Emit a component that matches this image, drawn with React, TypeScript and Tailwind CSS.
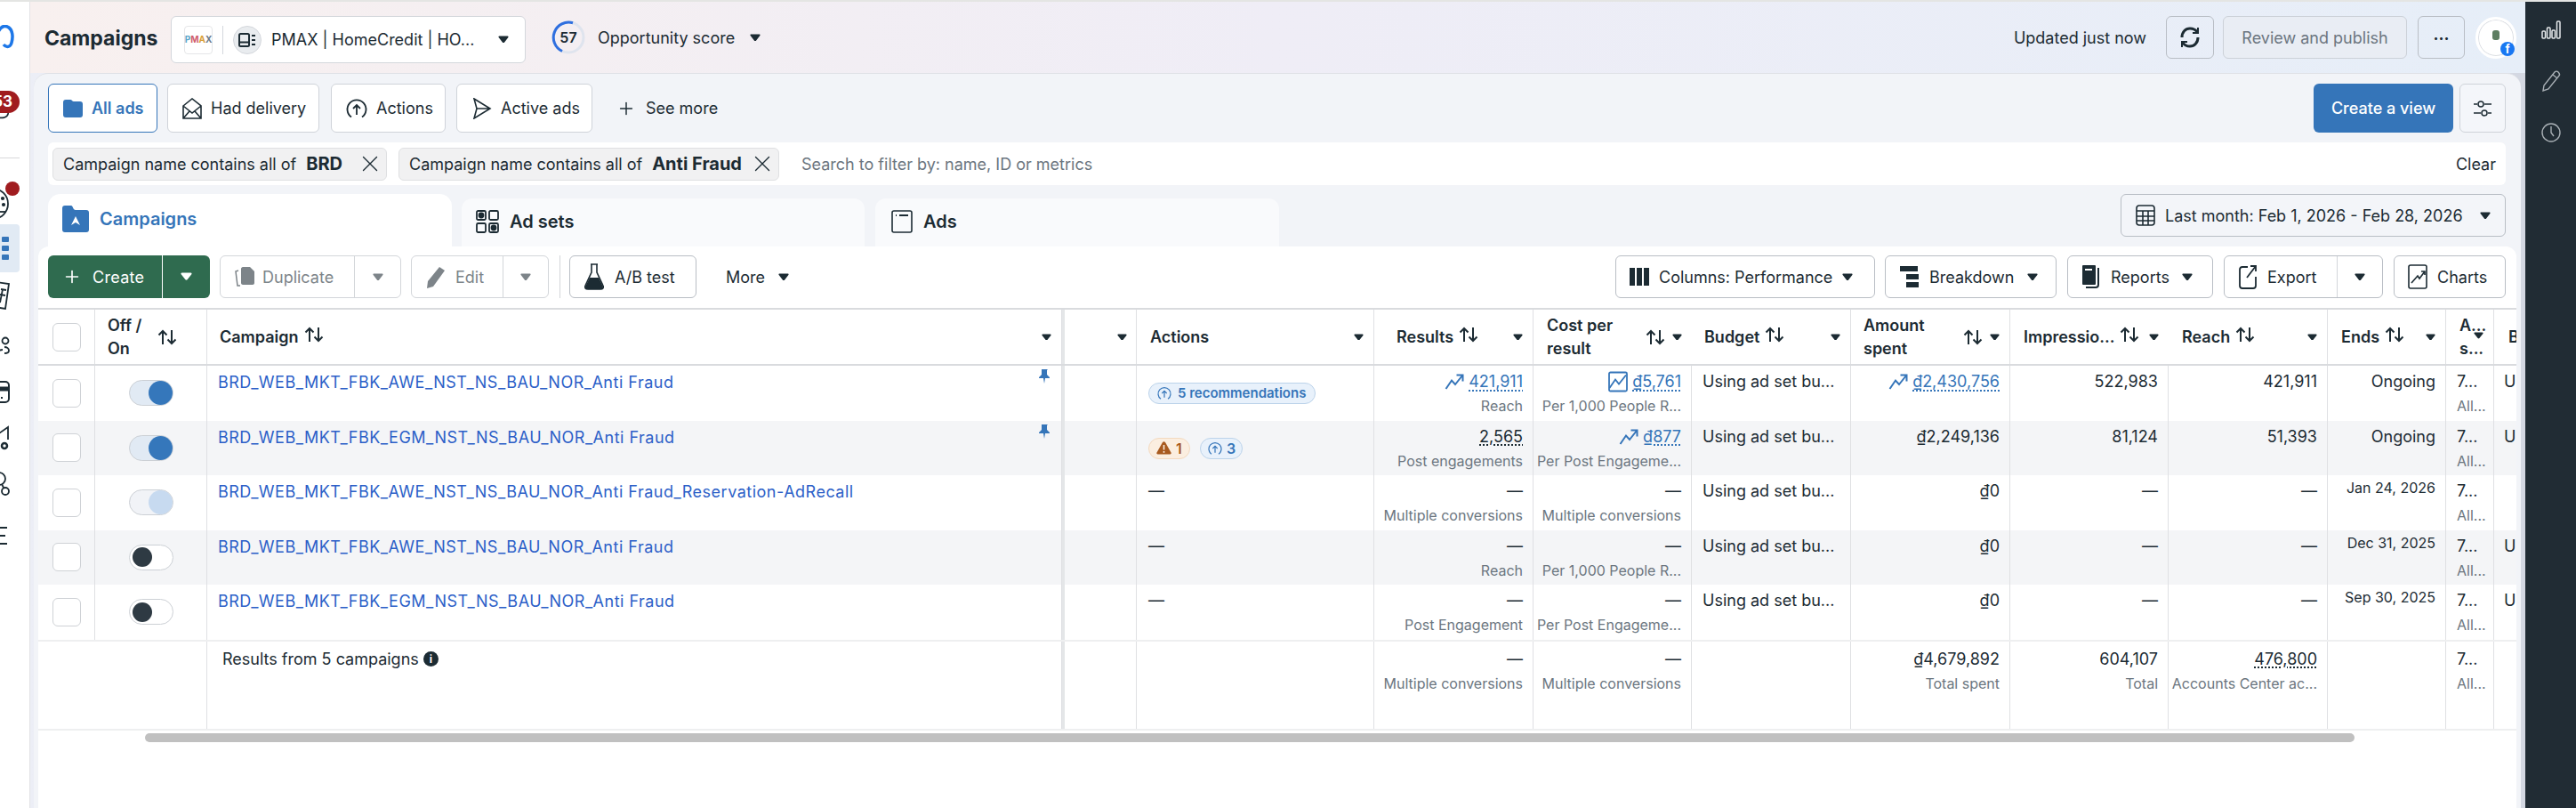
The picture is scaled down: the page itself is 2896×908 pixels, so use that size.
import type { ReactNode } from 'react'
import { Plus, X } from 'lucide-react'

const FONT = "font-['Inter','Liberation_Sans',sans-serif]"
const COLS =
  'grid grid-cols-[64px_126px_961px_84px_267px_179px_178px_179px_179px_178px_179px_133px_54px_25px]'
const DIV = 'border-r border-[#dfe0e3]'
const BTN = 'flex items-center border border-[#b9bec5] rounded-[6px] bg-white h-[48px] text-[18px]'

function Caret({ className = 'text-[#1c2b33]', w = 12 }: { className?: string; w?: number }) {
  return (
    <svg width={w} height={w * 0.72} viewBox="0 0 12 9" className={`shrink-0 ${className}`}>
      <path d="M1.2 0.6h9.6c.9 0 1.3 1 .8 1.6L7 8c-.5.6-1.5.6-2 0L.4 2.2C-.1 1.6.3.6 1.2.6z" fill="currentColor" />
    </svg>
  )
}

function Sort() {
  return (
    <svg width="22" height="20" viewBox="0 0 22 20" fill="none" stroke="#1c2b33" strokeWidth="2" className="shrink-0">
      <path d="M6 18V3M1.5 7.5 6 3l4.500 4.500M16 2v15M11.500 12.500 16 17l4.500-4.500" />
    </svg>
  )
}

function Trend({ className = '' }: { className?: string }) {
  return (
    <svg width="22" height="20" viewBox="0 0 22 20" fill="none" stroke="#3575b9" strokeWidth="2" className={`shrink-0 ${className}`}>
      <path d="M1.500 18 8 8.500l4 4.500L20 3M13.500 2.500H20.500V9.500" />
    </svg>
  )
}

function ChartBox() {
  return (
    <svg width="22" height="24" viewBox="0 0 22 24" fill="none" stroke="#3575b9" strokeWidth="1.800" className="shrink-0">
      <rect x="1" y="1.500" width="20" height="21" rx="1.500" />
      <path d="M1.500 19 8 9.500l4 5 8-10" />
    </svg>
  )
}

function ActionIcon({ color = '#1c2b33', size = 24 }: { color?: string; size?: number }) {
  return (
    <svg width={size} height={size} viewBox="0 0 24 24" fill="none" stroke={color} strokeWidth="1.800" className="shrink-0">
      <path d="M6 21.500A10.500 10.500 0 1 1 18 21.500" />
      <path d="M12 19V8M8 12l4-4 4 4" />
    </svg>
  )
}

function Nav() {
  return (
    <nav className="w-[34px] shrink-0 bg-white border-r border-[#e3e3e5] overflow-hidden flex flex-col text-[#1c2b33]">
      <svg width="16" height="30" viewBox="0 0 16 30" fill="none" stroke="#1d77e8" strokeWidth="3.500" className="mt-[26px]">
        <path d="M-2 8C1 1 6 0 10 3c4 3 5 10 3 17-1 5-6 6-9 2" />
      </svg>
      <div className="relative mt-[44px] h-[36px]">
        <svg width="12" height="36" viewBox="0 0 12 36" fill="none" stroke="#1c2b33" strokeWidth="1.800">
          <path d="M-2 22c6-3 12-1 11 4-1 4-6 5-11 4" />
        </svg>
        <span className="absolute left-0 top-0 h-[25px] w-[22px] rounded-r-full bg-[#a01c1f] text-white text-[17px] font-bold leading-[25px] pr-[8px] overflow-hidden flex justify-end">
          53
        </span>
      </div>
      <div className="mt-[39px] h-[1px] w-[22px] bg-[#d8d9db]" />
      <div className="relative mt-[26px] h-[48px]">
        <svg width="12" height="40" viewBox="0 0 12 40" fill="none" stroke="#1c2b33" strokeWidth="1.800" className="mt-[6px]">
          <circle cx="-8" cy="19" r="17" />
          <circle cx="3" cy="13" r="1.200" fill="#1c2b33" />
          <circle cx="4" cy="20" r="1.200" fill="#1c2b33" />
          <path d="M-6 28h12" />
        </svg>
        <span className="absolute left-[6px] top-0 h-[16px] w-[16px] rounded-full bg-[#a01c1f]" />
      </div>
      <div className="h-[54px] w-[22px] rounded-r-[4px] bg-[#e1eaf4] flex flex-col justify-center gap-[4px]">
        <span className="h-[6px] w-[8px] rounded-[1px] bg-[#3575b9] ml-[2px]" />
        <span className="h-[6px] w-[8px] rounded-[1px] bg-[#3575b9] ml-[2px]" />
        <span className="h-[6px] w-[8px] rounded-[1px] bg-[#3575b9] ml-[2px]" />
      </div>
      <svg width="12" height="34" viewBox="0 0 12 34" fill="none" stroke="#1c2b33" strokeWidth="1.800" className="mt-[10px]">
        <path d="M-4 1 10 3 6 31-6 29M1 9 7 10M0 15 6 16M3 9 0 24" />
      </svg>
      <svg width="12" height="24" viewBox="0 0 12 24" fill="none" stroke="#1c2b33" strokeWidth="1.800" className="mt-[28px]">
        <circle cx="6" cy="5" r="3.500" />
        <path d="M-4 22c0-5 3-7 7-7M5 12c3 0 5 2 5 4s-2 3-5 3" />
      </svg>
      <svg width="12" height="26" viewBox="0 0 12 26" fill="none" stroke="#1c2b33" strokeWidth="2" className="mt-[26px]">
        <rect x="-14" y="1" width="24" height="23" rx="4" />
        <path d="M-12 9H10" strokeWidth="5" />
        <path d="M1 19h2" />
      </svg>
      <svg width="12" height="30" viewBox="0 0 12 30" fill="none" stroke="#1c2b33" strokeWidth="1.800" className="mt-[24px]">
        <path d="M-4 11 9 2v14" />
        <circle cx="5" cy="23" r="3" strokeWidth="2.500" />
      </svg>
      <svg width="12" height="28" viewBox="0 0 12 28" fill="none" stroke="#1c2b33" strokeWidth="1.800" className="mt-[22px]">
        <circle cx="-1" cy="8" r="7" />
        <circle cx="6" cy="22" r="4" />
        <path d="M2 14l2 4" />
      </svg>
      <div className="mt-[34px] flex flex-col gap-[7px]">
        <span className="h-[2px] w-[8px] bg-[#1c2b33]" />
        <span className="h-[2px] w-[6px] bg-[#1c2b33]" />
        <span className="h-[2px] w-[8px] bg-[#1c2b33]" />
      </div>
    </nav>
  )
}

function Header() {
  return (
    <header className="h-[80px] shrink-0 flex items-center pl-[16px] pr-[10px] bg-gradient-to-r from-[#f8f0ef] via-[#efedf6] to-[#e6eef8]">
      <h1 className="text-[23px] font-bold text-[#1c2b33] w-[142px] mt-[2px]">Campaigns</h1>
      <div className="h-[53px] w-[399px] mt-[5px] flex items-center bg-white border border-[#d4d7dc] rounded-[6px] pl-[14px] text-[18px]">
        <span className="w-[32px] h-[32px] rounded-[4px] border border-[#e5e6e8] flex items-center justify-center text-[10px] font-bold">
          <span className="text-[#5aa5c9]">P</span>
          <span className="text-[#cf5d6d]">M</span>
          <span className="text-[#d9a13a]">A</span>
          <span className="text-[#6c7a89]">X</span>
        </span>
        <span className="w-[1px] h-[32px] bg-[#d4d7dc] ml-[11px] mr-[11px]" />
        <span className="w-[32px] h-[32px] rounded-full bg-[#e9ecef] border border-[#d4d7dc] flex items-center justify-center">
          <svg width="20" height="16" viewBox="0 0 20 16" fill="none" stroke="#1c2b33" strokeWidth="2">
            <rect x="1" y="1" width="11" height="14" rx="1.500" />
            <path d="M1 10.500h11M15 3h4M15 8h4M15 13h4" />
          </svg>
        </span>
        <span className="ml-[11px] w-[255px]">PMAX | HomeCredit | HO...</span>
        <Caret />
      </div>
      <div className="ml-[29px] relative w-[38px] h-[38px] flex items-center justify-center">
        <svg width="38" height="38" viewBox="0 0 38 38" fill="none" strokeWidth="3" className="absolute inset-0">
          <circle cx="19" cy="19" r="17" stroke="#dfe4ee" />
          <path d="M12 34.500A17 17 0 0 1 24 2.800" stroke="#2f6fdf" />
        </svg>
        <span className="text-[16px] font-semibold">57</span>
      </div>
      <span className="ml-[14px] text-[18px] w-[171px]">Opportunity score</span>
      <Caret />
      <div className="ml-auto flex items-center">
        <span className="text-[18px] mr-[22px]">Updated just now</span>
        <button className={`${BTN} w-[54px] justify-center !bg-transparent`}>
          <svg width="24" height="28" viewBox="0 0 24 28" fill="none" stroke="#1c2b33" strokeWidth="3">
            <path d="M3 14c0-6 4-10 9-10 3 0 6 1 8 4M21 14c0 6-4 10-9 10-3 0-6-1-8-4" />
            <path d="M21 3v6h-6M3 25v-6h6" strokeWidth="2" />
          </svg>
        </button>
        <button className={`${BTN} ml-[10px] w-[207px] justify-center !bg-[#e9edf4] !border-[#ccd1d8] text-[#6c7680]`}>
          Review and publish
        </button>
        <button className={`${BTN} ml-[12px] w-[53px] justify-center !bg-transparent`}>
          <span className="font-bold text-[18px] leading-[18px] -mt-[6px]">...</span>
        </button>
        <div className="ml-[12px] relative w-[46px] h-[47px] rounded-full bg-white border-[3px] border-white shadow-[inset_0_0_0_1px_#dcdfe4] flex items-center justify-center">
          <span className="w-[8px] h-[11px] rounded-[3px] bg-[#5e7e62] -mt-[6px]" />
          <span className="absolute -right-[1px] bottom-0 w-[16px] h-[16px] rounded-full bg-[#1877f2] text-white text-[13px] font-bold leading-[17px] text-center">
            f
          </span>
        </div>
      </div>
    </header>
  )
}

function ViewTab({ children, active, className }: { children: ReactNode; active?: boolean; className: string }) {
  return (
    <button
      className={`h-[55px] flex items-center gap-[10px] rounded-[6px] border bg-white text-[18px] ${
        active ? 'border-[#3575b9] text-[#3575b9] font-semibold' : 'border-[#cfd3d9]'
      } ${className}`}
    >
      {children}
    </button>
  )
}

function Chip({ label, value, className }: { label: string; value: string; className: string }) {
  return (
    <div className={`h-[37px] flex items-center bg-[#f1f1f2] border border-[#dfe0e2] rounded-[6px] pl-[11px] text-[18px] ${className}`}>
      <span>{label}</span>
      <span className="font-bold text-[20px] ml-[11px]">{value}</span>
      <X size={30} strokeWidth={1.100} className="ml-auto mr-[3px]" />
    </div>
  )
}

function Filters() {
  return (
    <>
      <div className="flex items-center">
        <ViewTab active className="w-[123px] pl-[16px]">
          <svg width="22" height="20" viewBox="0 0 22 20" fill="#3575b9">
            <path d="M0 3c0-2 1-3 3-3h5c2 0 2 2 4 2h7c2 0 3 1 3 3v12c0 2-1 3-3 3H3c-2 0-3-1-3-3z" />
          </svg>
          All ads
        </ViewTab>
        <ViewTab className="w-[171px] ml-[11px] pl-[16px]">
          <svg width="22" height="24" viewBox="0 0 22 24" fill="none" stroke="#1c2b33" strokeWidth="1.600" className="shrink-0">
            <path d="M1 9 11 1l10 8v14H1zM1 9l10 8 10-8M1 23l7-8M21 23l-7-8" />
          </svg>
          Had delivery
        </ViewTab>
        <ViewTab className="w-[129px] ml-[13px] pl-[16px]">
          <ActionIcon />
          Actions
        </ViewTab>
        <ViewTab className="w-[153px] ml-[12px] pl-[17px]">
          <svg width="22" height="24" viewBox="0 0 22 24" fill="none" stroke="#1c2b33" strokeWidth="1.600" className="shrink-0">
            <path d="M2 1 20 12 2 23l3-11zM5 12h15" />
          </svg>
          Active ads
        </ViewTab>
        <Plus size={22} strokeWidth={1.600} className="ml-[27px]" />
        <span className="text-[18px] ml-[11px]">See more</span>
        <button className="ml-auto w-[157px] h-[55px] rounded-[6px] bg-[#3575b9] text-white text-[18px] font-medium">
          Create a view
        </button>
        <button className="ml-[7px] w-[52px] h-[55px] rounded-[6px] border border-[#cfd3d9] bg-[#f4f6fa] flex items-center justify-center">
          <svg width="22" height="20" viewBox="0 0 22 20" fill="none" stroke="#1c2b33" strokeWidth="1.500">
            <path d="M1 5h4M13 5h8M1 15h8M17 15h4" />
            <circle cx="9" cy="5" r="3" />
            <circle cx="13" cy="15" r="3" />
          </svg>
        </button>
      </div>
      <div className="mt-[11px] h-[48px] flex items-center bg-white rounded-[6px] pl-[5px] pr-[11px] text-[18px]">
        <Chip label="Campaign name contains all of" value="BRD" className="w-[376px]" />
        <Chip label="Campaign name contains all of" value="Anti Fraud" className="w-[428px] ml-[13px]" />
        <span className="ml-[25px] text-[#6c7680]">Search to filter by: name, ID or metrics</span>
        <span className="ml-auto">Clear</span>
      </div>
      <div className="mt-[10px] h-[59px] flex items-end">
        <div className="w-[454px] h-[59px] rounded-t-[14px] bg-white flex items-center gap-[12px] pl-[16px] pb-[4px] text-[20px] font-semibold text-[#3575b9]">
          <svg width="30" height="30" viewBox="0 0 30 30">
            <path d="M0 3c0-2 1-3 3-3h7c2 0 2 5 5 5h12c2 0 3 1 3 3v19c0 2-1 3-3 3H3c-2 0-3-1-3-3z" fill="#3575b9" />
            <path d="M15 12l5 10-5-3-5 3z" fill="#fff" />
          </svg>
          Campaigns
        </div>
        <div className="ml-[11px] w-[453px] h-[54px] rounded-t-[12px] bg-[#f9fafc] flex items-center gap-[12px] pl-[16px] pb-[3px] text-[20px] font-semibold">
          <svg width="26" height="26" viewBox="0 0 26 26" fill="none" stroke="#1c2b33" strokeWidth="1.800" className="shrink-0">
            <rect x="1" y="1" width="10" height="10" rx="1.500" />
            <rect x="15" y="1" width="10" height="10" rx="1.500" />
            <rect x="1" y="15" width="10" height="10" rx="1.500" />
            <rect x="15" y="15" width="10" height="10" rx="1.500" />
            <circle cx="6" cy="6" r="2.500" fill="#1c2b33" />
            <circle cx="20" cy="20" r="2.500" fill="#1c2b33" />
          </svg>
          Ad sets
        </div>
        <div className="ml-[12px] w-[454px] h-[54px] rounded-t-[12px] bg-[#f9fafc] flex items-center gap-[12px] pl-[18px] pb-[3px] text-[20px] font-semibold">
          <svg width="24" height="26" viewBox="0 0 24 26" fill="none" stroke="#1c2b33" strokeWidth="1.600" className="shrink-0">
            <rect x="1" y="1" width="22" height="24" rx="2" />
            <path d="M5 6h1M9 6h10" strokeWidth="2" />
          </svg>
          Ads
        </div>
        <button className={`${BTN} ml-auto self-start w-[433px] pl-[16px] gap-[11px] !bg-[#f3f5f9]`}>
          <svg width="22" height="24" viewBox="0 0 22 24" fill="none" stroke="#1c2b33" strokeWidth="1.600" className="shrink-0">
            <rect x="1" y="1" width="20" height="22" rx="3" />
            <path d="M1 7h20M1 13h20M1 18h20M8 7v16M14 7v16" />
          </svg>
          <span className="whitespace-nowrap">Last month: Feb 1, 2026 - Feb 28, 2026</span>
          <Caret className="text-[#1c2b33] ml-[8px]" />
        </button>
      </div>
    </>
  )
}

function Toolbar() {
  return (
    <div className="flex items-center pl-[11px] pr-[12px] pt-[10px] text-[#1c2b33]">
      <button className="h-[48px] w-[128px] rounded-l-[6px] bg-[#2f6b4f] text-white text-[18px] tracking-[0.3px] flex items-center pl-[16px] gap-[12px]">
        <Plus size={22} strokeWidth={1.800} />
        Create
      </button>
      <button className="h-[48px] w-[53px] ml-[1px] rounded-r-[6px] bg-[#2f6b4f] flex items-center justify-center">
        <Caret className="text-white" w={13} />
      </button>
      <div className={`${BTN} ml-[11px] w-[204px] !border-[#d3d6da] text-[#7d8489]`}>
        <div className="w-[151px] h-full border-r border-[#d3d6da] flex items-center pl-[16px] gap-[9px]">
          <svg width="22" height="24" viewBox="0 0 22 24" className="shrink-0">
            <path d="M9 1h8l5 5v13c0 1-1 2-2 2H9c-1 0-2-1-2-2V3c0-1 1-2 2-2z" fill="#7d8489" />
            <path d="M4 5 1 6l2 16h3" fill="none" stroke="#7d8489" strokeWidth="1.500" />
          </svg>
          Duplicate
        </div>
        <div className="flex-1 flex justify-center">
          <Caret className="text-[#7d8489]" />
        </div>
      </div>
      <div className={`${BTN} ml-[11px] w-[155px] !border-[#d3d6da] text-[#7d8489]`}>
        <div className="w-[103px] h-full border-r border-[#d3d6da] flex items-center pl-[16px] gap-[11px]">
          <svg width="22" height="26" viewBox="0 0 22 26" className="shrink-0">
            <path d="M15 2l6 4L8 24l-7 2 1-8z" fill="#7d8489" />
          </svg>
          Edit
        </div>
        <div className="flex-1 flex justify-center">
          <Caret className="text-[#7d8489]" />
        </div>
      </div>
      <span className="ml-[12px] w-[1px] h-[48px] bg-[#d3d6da]" />
      <button className={`${BTN} ml-[10px] w-[143px] pl-[16px] gap-[12px]`}>
        <svg width="22" height="32" viewBox="0 0 22 32" className="shrink-0">
          <path d="M7 2h8M8 2v9L1 26c-1 2 0 4 3 4h14c3 0 4-2 3-4L14 11V2" fill="none" stroke="#1c2b33" strokeWidth="1.600" />
          <path d="M6 17h10l5 10c0 2-1 3-3 3H4c-2 0-3-1-3-3z" fill="#1c2b33" />
        </svg>
        A/B test
      </button>
      <span className="ml-[33px] text-[18px]">More</span>
      <Caret className="text-[#1c2b33] ml-[15px]" />
      <button className={`${BTN} ml-auto w-[292px] pl-[15px] gap-[11px]`}>
        <svg width="22" height="22" viewBox="0 0 22 22" fill="#1c2b33" className="shrink-0">
          <rect x="0" y="1" width="6" height="20" />
          <rect x="8" y="1" width="6" height="20" />
          <rect x="16" y="1" width="6" height="20" />
        </svg>
        <span className="whitespace-nowrap">Columns: Performance</span>
        <Caret className="text-[#1c2b33]" />
      </button>
      <button className={`${BTN} ml-[11px] w-[193px] pl-[16px] gap-[11px]`}>
        <svg width="22" height="24" viewBox="0 0 22 24" fill="#1c2b33" className="shrink-0">
          <rect x="0" y="0" width="20" height="6" />
          <rect x="7" y="9" width="14" height="6" />
          <rect x="7" y="18" width="14" height="6" />
        </svg>
        Breakdown
        <Caret className="text-[#1c2b33] ml-[4px]" />
      </button>
      <button className={`${BTN} ml-[12px] w-[164px] pl-[15px] gap-[11px]`}>
        <svg width="22" height="26" viewBox="0 0 22 26" className="shrink-0">
          <rect x="1" y="0" width="15" height="22" rx="1" fill="#1c2b33" />
          <path d="M19 3v19c0 2-1 3-3 3H5" fill="none" stroke="#1c2b33" strokeWidth="2" />
          <path d="M4 5h8" stroke="#fff" strokeWidth="2" />
        </svg>
        Reports
        <Caret className="text-[#1c2b33] ml-[3px]" />
      </button>
      <div className={`${BTN} ml-[12px] w-[179px]`}>
        <div className="w-[127px] h-full border-r border-[#d3d6da] flex items-center pl-[16px] gap-[12px]">
          <svg width="20" height="28" viewBox="0 0 20 28" fill="none" stroke="#1c2b33" strokeWidth="1.800" className="shrink-0">
            <path d="M10 3H4C2 3 1 4 1 6v18c0 2 1 3 3 3h12c2 0 3-1 3-3V14" />
            <path d="M9 15 19 2M13 2h6v6" />
          </svg>
          Export
        </div>
        <div className="flex-1 flex justify-center">
          <Caret />
        </div>
      </div>
      <button className={`${BTN} ml-[12px] w-[126px] pl-[15px] gap-[11px]`}>
        <svg width="22" height="28" viewBox="0 0 22 28" fill="none" stroke="#1c2b33" strokeWidth="1.600" className="shrink-0">
          <rect x="1" y="1" width="20" height="26" rx="2" />
          <path d="M4 21 11 13l2 3 6-8M15 8h4v4" />
        </svg>
        Charts
      </button>
    </div>
  )
}

function Check({ white }: { white?: boolean }) {
  return <span className={`w-[32px] h-[32px] rounded-[6px] border border-[#cfd2d6] ${white ? 'bg-white' : ''}`} />
}

function Toggle({ state }: { state: 'on' | 'dim' | 'off' }) {
  if (state === 'off') {
    return (
      <span className="w-[50px] h-[29px] rounded-full border border-[#ccd0d5] bg-white flex items-center pl-[3px]">
        <span className="w-[22px] h-[22px] rounded-full bg-[#2e3a43]" />
      </span>
    )
  }
  const track = state === 'on' ? 'bg-[#e1eaf4]' : 'bg-[#f1f3f7]'
  const knob = state === 'on' ? 'bg-[#3577bb]' : 'bg-[#c7daf0]'
  return (
    <span className={`w-[50px] h-[29px] rounded-full border border-[#ccd0d5] flex items-center justify-end ${track}`}>
      <span className={`w-[27px] h-[27px] rounded-full ${knob}`} />
    </span>
  )
}

function HeadCell({
  title,
  second,
  sort,
  caret = true,
  pl = 'pl-[15px]',
  border = true,
}: {
  title: string
  second?: string
  sort?: boolean
  caret?: boolean
  pl?: string
  border?: boolean
}) {
  return (
    <div className={`relative flex items-center pr-[11px] text-[18px] font-semibold leading-[26px] ${pl} ${border ? DIV : ''}`}>
      <div className="whitespace-nowrap">
        {title}
        {second && <div>{second}</div>}
      </div>
      {second ? (
        <span className="ml-auto mr-[8px] flex">{sort && <Sort />}</span>
      ) : (
        sort && (
          <span className="ml-[6px] -mt-[6px]">
            <Sort />
          </span>
        )
      )}
      {caret && (second ? <Caret w={11} /> : <Caret w={11} className="ml-auto text-[#1c2b33]" />)}
    </div>
  )
}

function TableHead() {
  return (
    <div className={`${COLS} mt-[11px] h-[65px] border-t-2 border-b-2 border-[#d9dbde]`}>
      <div className={`flex items-center justify-center ${DIV}`}>
        <Check />
      </div>
      <div className={`flex items-center pl-[14px] pr-[12px] text-[18px] font-semibold leading-[26px] ${DIV}`}>
        <div>
          Off /<div>On</div>
        </div>
        <span className="ml-[18px]">
          <Sort />
        </span>
      </div>
      <HeadCell title="Campaign" sort pl="pl-[14px]" />
      <div className={`flex items-center justify-end pr-[10px] border-l-[3px] border-l-[#e4e6e8] ${DIV}`}>
        <Caret w={11} />
      </div>
      <HeadCell title="Actions" />
      <HeadCell title="Results" sort pl="pl-[25px]" />
      <HeadCell title="Cost per" second="result" sort border={false} />
      <HeadCell title="Budget" sort pl="pl-[14px]" />
      <HeadCell title="Amount" second="spent" sort pl="pl-[14px]" />
      <HeadCell title="Impressio..." sort border={false} />
      <HeadCell title="Reach" sort />
      <HeadCell title="Ends" sort />
      <div className={`relative pl-[15px] text-[18px] font-semibold leading-[26px] flex items-center ${DIV}`}>
        <div>
          A...<div>s...</div>
        </div>
        <span className="absolute left-[31px] top-[25px]">
          <Caret w={11} />
        </span>
      </div>
      <div className="pl-[16px] overflow-hidden text-[18px] font-semibold flex items-center">B</div>
    </div>
  )
}

type NumCell = { v: ReactNode; sub?: string; link?: boolean; dotted?: boolean; icon?: ReactNode }

function Num({ v, sub, link, dotted, icon }: NumCell) {
  return (
    <div className={`flex flex-col items-end pr-[11px] pt-[6px] ${DIV} whitespace-nowrap overflow-hidden`}>
      <div className="flex items-center gap-[5px] h-[24px]">
        {icon}
        <span
          className={`${link ? 'text-[#3575b9]' : ''} ${
            dotted ? 'underline decoration-dotted underline-offset-[3px] decoration-[1.500px]' : ''
          }`}
        >
          {v}
        </span>
      </div>
      {sub && <div className="mt-[3px] h-[24px] leading-[24px] text-[16px] text-[#6c7680]">{sub}</div>}
    </div>
  )
}

const ROWS = [
  {
    toggle: 'on' as const,
    pin: true,
    name: 'BRD_WEB_MKT_FBK_AWE_NST_NS_BAU_NOR_Anti Fraud',
    actions: (
      <span className="mt-[19px] h-[24px] w-[188px] rounded-full bg-[#e8f1fb] border border-[#bcd3ea] text-[#3575b9] text-[15px] font-semibold flex items-center pl-[9px] gap-[7px]">
        <ActionIcon color="#3575b9" size={16} />
        5 recommendations
      </span>
    ),
    results: { v: '421,911', sub: 'Reach', link: true, dotted: true, icon: <Trend /> },
    cost: { v: '₫5,761', sub: 'Per 1,000 People R...', link: true, dotted: true, icon: <ChartBox /> },
    amount: { v: '₫2,430,756', link: true, dotted: true, icon: <Trend /> },
    imp: '522,983',
    reach: '421,911',
    ends: 'Ongoing',
    b: 'U',
  },
  {
    toggle: 'on' as const,
    pin: true,
    name: 'BRD_WEB_MKT_FBK_EGM_NST_NS_BAU_NOR_Anti Fraud',
    actions: (
      <div className="mt-[19px] flex gap-[11px]">
        <span className="h-[24px] w-[47px] rounded-full bg-[#fbeee0] border border-[#f3d9bf] text-[#a85a1f] text-[16px] font-semibold flex items-center pl-[8px] gap-[5px]">
          <svg width="17" height="15" viewBox="0 0 17 15">
            <path d="M7 1c1-1 2-1 3 0l6.500 11.500c.5 1 0 2-1 2h-14c-1 0-1.500-1-1-2z" fill="#a85a1f" />
            <path d="M8.500 4v5.500M8.500 11v1.800" stroke="#fbeee0" strokeWidth="1.600" />
          </svg>
          1
        </span>
        <span className="h-[24px] w-[48px] rounded-full bg-[#e8f1fb] border border-[#bcd3ea] text-[#3575b9] text-[16px] font-semibold flex items-center pl-[8px] gap-[5px]">
          <ActionIcon color="#3575b9" size={16} />3
        </span>
      </div>
    ),
    results: { v: '2,565', sub: 'Post engagements', dotted: true },
    cost: { v: '₫877', sub: 'Per Post Engageme...', link: true, dotted: true, icon: <Trend /> },
    amount: { v: '₫2,249,136' },
    imp: '81,124',
    reach: '51,393',
    ends: 'Ongoing',
    b: 'U',
  },
  {
    toggle: 'dim' as const,
    name: 'BRD_WEB_MKT_FBK_AWE_NST_NS_BAU_NOR_Anti Fraud_Reservation-AdRecall',
    results: { v: '—', sub: 'Multiple conversions' },
    cost: { v: '—', sub: 'Multiple conversions' },
    amount: { v: '₫0' },
    imp: '—',
    reach: '—',
    ends: 'Jan 24, 2026',
    b: '',
  },
  {
    toggle: 'off' as const,
    name: 'BRD_WEB_MKT_FBK_AWE_NST_NS_BAU_NOR_Anti Fraud',
    results: { v: '—', sub: 'Reach' },
    cost: { v: '—', sub: 'Per 1,000 People R...' },
    amount: { v: '₫0' },
    imp: '—',
    reach: '—',
    ends: 'Dec 31, 2025',
    b: 'U',
  },
  {
    toggle: 'off' as const,
    name: 'BRD_WEB_MKT_FBK_EGM_NST_NS_BAU_NOR_Anti Fraud',
    results: { v: '—', sub: 'Post Engagement' },
    cost: { v: '—', sub: 'Per Post Engageme...' },
    amount: { v: '₫0' },
    imp: '—',
    reach: '—',
    ends: 'Sep 30, 2025',
    b: 'U',
  },
]

function AttrCell() {
  return (
    <div className={`pl-[12px] pt-[6px] whitespace-nowrap ${DIV}`}>
      <div className="h-[24px]">7...</div>
      <div className="mt-[3px] h-[24px] leading-[24px] text-[16px] text-[#6c7680]">All...</div>
    </div>
  )
}

function Row({ r, i }: { r: (typeof ROWS)[number]; i: number }) {
  const isDate = r.ends !== 'Ongoing'
  return (
    <div className={`${COLS} h-[61.500px] text-[18px] leading-[24px] ${i % 2 === 1 ? 'bg-[#f4f5f7]' : ''}`}>
      <div className={`flex items-center justify-center ${DIV}`}>
        <Check white={i % 2 === 1} />
      </div>
      <div className={`flex items-center justify-center ${DIV}`}>
        <Toggle state={r.toggle} />
      </div>
      <div className={`relative pl-[12px] pt-[7px] text-[#2c5fc8] tracking-[0.5px] ${DIV}`}>
        <span>{r.name}</span>
        {r.pin && (
          <svg width="16" height="18" viewBox="0 0 16 18" fill="#3575b9" className="absolute right-[11px] top-[3px]">
            <path d="M5 1h7l-1 1v5l3 3v1H9l-1 6-1-6H2v-1l3-3V2z" />
          </svg>
        )}
      </div>
      <div className={`border-l-[3px] border-l-[#e4e6e8] ${DIV}`} />
      <div className={`pl-[13px] ${r.actions ? '' : 'pt-[6px]'} ${DIV}`}>
        {r.actions ?? <div className="h-[24px]">—</div>}
      </div>
      <Num {...r.results} />
      <Num {...r.cost} />
      <div className={`pl-[12px] pt-[6px] whitespace-nowrap ${DIV}`}>Using ad set bu...</div>
      <Num {...r.amount} />
      <Num v={r.imp} />
      <Num v={r.reach} />
      <div className={`text-right pr-[11px] ${isDate ? 'pt-[2px] text-[16px]' : 'pt-[6px]'} ${DIV}`}>{r.ends}</div>
      <AttrCell />
      <div className="pl-[11px] pt-[6px]">{r.b}</div>
    </div>
  )
}

function FootNum({ v, sub, dotted }: { v: string; sub: string; dotted?: boolean }) {
  return (
    <div className={`flex flex-col items-end pr-[11px] pt-[8px] whitespace-nowrap ${DIV}`}>
      <div className={`h-[24px] ${dotted ? 'underline decoration-dotted underline-offset-[3px]' : ''}`}>{v}</div>
      <div className="mt-[3px] h-[24px] leading-[24px] text-[16px] text-[#6c7680]">{sub}</div>
    </div>
  )
}

function TableFoot() {
  return (
    <div className={`${COLS} h-[102px] border-t-2 border-b-2 border-[#eeeff0] text-[18px] leading-[24px]`}>
      <div className={`col-span-2 ${DIV}`} />
      <div className={`pl-[17px] pt-[8px] flex items-start gap-[5px] ${DIV}`}>
        Results from 5 campaigns
        <span className="mt-[3px] w-[17px] h-[17px] rounded-full bg-[#1c2b33] text-white text-[12px] leading-[17px] font-bold text-center">
          i
        </span>
      </div>
      <div className={`border-l-[3px] border-l-[#e4e6e8] ${DIV}`} />
      <div className={DIV} />
      <FootNum v="—" sub="Multiple conversions" />
      <FootNum v="—" sub="Multiple conversions" />
      <div className={DIV} />
      <FootNum v="₫4,679,892" sub="Total spent" />
      <FootNum v="604,107" sub="Total" />
      <FootNum v="476,800" sub="Accounts Center ac..." dotted />
      <div className={DIV} />
      <div className={`pl-[12px] pt-[8px] whitespace-nowrap ${DIV}`}>
        <div className="h-[24px]">7...</div>
        <div className="mt-[3px] h-[24px] leading-[24px] text-[16px] text-[#6c7680]">All...</div>
      </div>
      <div />
    </div>
  )
}

function Rail() {
  return (
    <aside className="w-[57px] shrink-0 bg-[#212c34] flex flex-col items-center pt-[20px] text-[#a9b0b5]">
      <svg width="22" height="22" viewBox="0 0 22 22" fill="none" stroke="#e6e9eb" strokeWidth="1.500">
        <rect x="1" y="13" width="3.500" height="8" rx="1" />
        <rect x="6.500" y="9" width="3.500" height="12" rx="1" />
        <rect x="12" y="12" width="3.500" height="9" rx="1" />
        <rect x="17.500" y="2" width="3.500" height="19" rx="1" />
      </svg>
      <svg width="22" height="24" viewBox="0 0 22 24" fill="none" stroke="currentColor" strokeWidth="1.400" className="mt-[35px]">
        <path d="M15 2c1-1 3-1 4 0s2 3 1 4L8 21l-6 2 1-6zM13 5l5 4" />
      </svg>
      <svg width="22" height="22" viewBox="0 0 22 22" fill="none" stroke="currentColor" strokeWidth="1.400" className="mt-[35px]">
        <circle cx="11" cy="11" r="10" />
        <path d="M11 4v7l3 4" />
      </svg>
    </aside>
  )
}

export default function App() {
  return (
    <div className={`${FONT} w-[2896px] h-[908px] overflow-hidden bg-white text-[#1c2b33] flex flex-col`}>
      <div className="h-[2px] shrink-0 bg-[#e4e5e3]" />
      <div className="flex-1 flex min-h-0">
        <Nav />
        <main className="flex-1 min-w-0 flex flex-col bg-gradient-to-r from-[#eceef6] to-[#d4d8e2]">
          <Header />
          <section className="flex-1 min-h-0 ml-[4px] mr-[5px] rounded-t-[16px] border-t border-[#dfe1e6] bg-[#f2f4f8] flex flex-col">
            <div className="pl-[16px] pr-[17px] pt-[11px]">
              <Filters />
            </div>
            <div className="flex-1 ml-[5px] mr-[5px] bg-white rounded-t-[12px]">
              <Toolbar />
              <TableHead />
              {ROWS.map((r, i) => (
                <Row key={i} r={r} i={i} />
              ))}
              <TableFoot />
              <div className="mt-[3px] ml-[120px] w-[2484px] h-[10px] rounded-full bg-[#c0c0c0]" />
            </div>
          </section>
        </main>
        <Rail />
      </div>
    </div>
  )
}
